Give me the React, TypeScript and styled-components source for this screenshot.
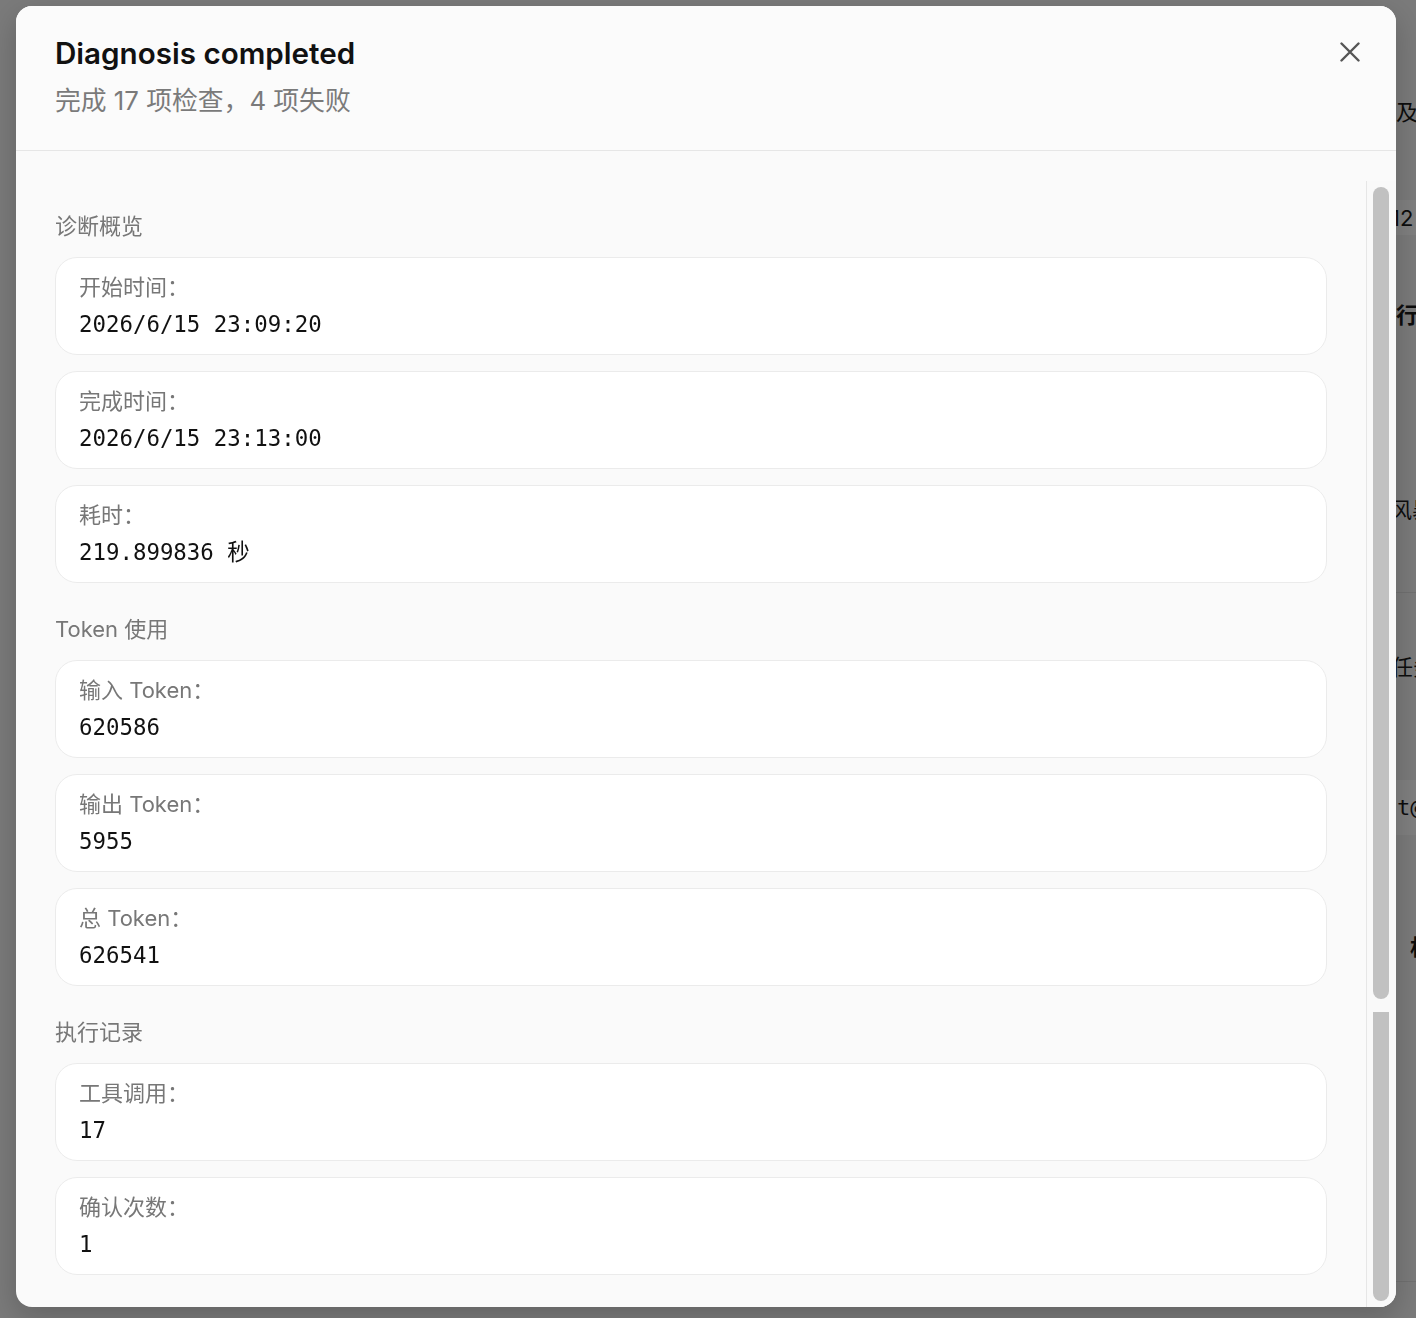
import React from 'react';
import styled, { createGlobalStyle } from 'styled-components';

const GlobalStyle = createGlobalStyle`
  html, body {
    margin: 0;
    padding: 0;
    width: 1416px;
    height: 1318px;
    overflow: hidden;
    font-family: Inter, 'Noto Sans CJK SC', sans-serif;
  }
  * {
    box-sizing: border-box;
  }
`;

// 뒤쪽 페이지 (오버레이 아래)
const BgPage = styled.div`
  width: 1416px;
  height: 1318px;
  background: #f5f5f5;
  display: grid;
  grid-template-columns: 1396px 1fr;
  overflow: hidden;
`;

const BgColumn = styled.div`
  display: flex;
  flex-direction: column;
  min-width: 0;
`;

const BgRow = styled.div<{ $h: number; $band?: boolean; $line?: boolean }>`
  height: ${(p) => p.$h}px;
  flex: none;
  display: flex;
  align-items: center;
  background: ${(p) => (p.$band ? '#ffffff' : 'transparent')};
  border-top: ${(p) => (p.$line ? '1px solid #e0e0e0' : 'none')};
`;

const BgText = styled.span<{ $bold?: boolean; $mono?: boolean; $shift?: number }>`
  white-space: nowrap;
  font-size: 22px;
  color: #1a1a1a;
  font-weight: ${(p) => (p.$bold ? 700 : 400)};
  font-family: ${(p) =>
    p.$mono ? "'DejaVu Sans Mono', monospace" : "Inter, 'Noto Sans CJK SC', sans-serif"};
  margin-left: ${(p) => p.$shift || 0}px;
`;

const Overlay = styled.div`
  position: fixed;
  inset: 0;
  background: rgba(0, 0, 0, 0.5);
  padding: 6px 20px 11px 16px;
  display: flex;
`;

const Modal = styled.div`
  flex: 1;
  display: flex;
  flex-direction: column;
  background: #fafafa;
  border-radius: 16px;
  overflow: hidden;
  box-shadow: 0 10px 30px rgba(0, 0, 0, 0.2);
`;

const Header = styled.div`
  display: flex;
  align-items: flex-start;
  justify-content: space-between;
  padding: 29px 36px 31px 39px;
  border-bottom: 1px solid #e6e6e6;
  background: #fbfbfb;
`;

const Title = styled.h2`
  margin: 0;
  font-family: Inter, 'Noto Sans CJK SC', sans-serif;
  font-size: 29.6px;
  line-height: 36px;
  font-weight: 600;
  color: #111;
`;

const Subtitle = styled.p`
  margin: 12px 0 0;
  font-size: 25.8px;
  line-height: 36px;
  color: #7a7a7a;
`;

const CloseButton = styled.button`
  margin-top: 7px;
  width: 20px;
  height: 20px;
  padding: 0;
  border: none;
  background: none;
  color: #555;
  cursor: pointer;
  display: flex;
`;

const Body = styled.div`
  flex: 1;
  min-height: 0;
  display: flex;
  padding-top: 30px;
`;

const ScrollArea = styled.div`
  flex: 1;
  min-width: 0;
  overflow: hidden;
  padding: 30px 39px 30px 39px;
  display: flex;
  flex-direction: column;
  gap: 31px;
`;

const Section = styled.section`
  display: flex;
  flex-direction: column;
`;

const SectionTitle = styled.div`
  font-size: 22px;
  line-height: 30px;
  color: #777;
  margin-bottom: 16px;
`;

const CardList = styled.div`
  display: flex;
  flex-direction: column;
  gap: 16px;
`;

const Card = styled.div`
  background: #fff;
  border: 1px solid #ebebeb;
  border-radius: 22px;
  padding: 14px 23px;
  height: 98px;
  display: flex;
  flex-direction: column;
  gap: 7px;
`;

const Label = styled.div`
  font-size: 22px;
  line-height: 30px;
  height: 30px;
  color: #777;
`;

const Value = styled.div`
  font-family: 'DejaVu Sans Mono', 'Noto Sans CJK SC', monospace;
  font-size: 22.4px;
  line-height: 30px;
  height: 30px;
  color: #111;
`;

const Track = styled.div`
  width: 30px;
  flex: none;
  border-left: 1px solid #e6e6e6;
  background: #f9f9f9;
  padding: 6px 7px 6px 6px;
  display: flex;
  flex-direction: column;
  gap: 13px;
`;

const Thumb = styled.div<{ $tail?: boolean }>`
  background: #c1c1c1;
  border-radius: ${(p) => (p.$tail ? '0 0 8px 8px' : '8px')};
  height: ${(p) => (p.$tail ? 'auto' : '812px')};
  flex: ${(p) => (p.$tail ? '1' : 'none')};
`;

const sections = [
  {
    title: '诊断概览',
    items: [
      ['开始时间：', '2026/6/15 23:09:20'],
      ['完成时间：', '2026/6/15 23:13:00'],
      ['耗时：', '219.899836 秒'],
    ],
  },
  {
    title: 'Token 使用',
    items: [
      ['输入 Token：', '620586'],
      ['输出 Token：', '5955'],
      ['总 Token：', '626541'],
    ],
  },
  {
    title: '执行记录',
    items: [
      ['工具调用：', '17'],
      ['确认次数：', '1'],
    ],
  },
];

const bgRows: { h: number; text?: string; bold?: boolean; mono?: boolean; band?: boolean; line?: boolean; shift?: number }[] = [
  { h: 80 },
  { h: 60, text: '及时' },
  { h: 60 },
  { h: 35, text: '12', band: true, shift: -5 },
  { h: 63 },
  { h: 30, text: '行为', bold: true },
  { h: 165 },
  { h: 30, text: '风暴', shift: -6 },
  { h: 69 },
  { h: 58, line: true },
  { h: 30, text: '任务', shift: -5 },
  { h: 100 },
  { h: 55, text: 't@mail', mono: true, band: true, shift: 1 },
  { h: 95 },
  { h: 30, text: '相关', bold: true, shift: 14 },
  { h: 321 },
  { h: 40, line: true },
];

const App = () => {
  return (
    <>
      <GlobalStyle />
      <BgPage>
        <div />
        <BgColumn>
          {bgRows.map((r, i) => (
            <BgRow key={i} $h={r.h} $band={r.band} $line={r.line}>
              {r.text && (
                <BgText $bold={r.bold} $mono={r.mono} $shift={r.shift}>
                  {r.text}
                </BgText>
              )}
            </BgRow>
          ))}
        </BgColumn>
      </BgPage>

      <Overlay>
        <Modal>
          <Header>
            <div>
              <Title>Diagnosis completed</Title>
              <Subtitle>完成 17 项检查，4 项失败</Subtitle>
            </div>
            <CloseButton aria-label="关闭">
              <svg width="20" height="20" viewBox="0 0 20 20" fill="none">
                <path d="M1.5 1.5L18.5 18.5M18.5 1.5L1.5 18.5" stroke="currentColor" strokeWidth="2.4" strokeLinecap="round" />
              </svg>
            </CloseButton>
          </Header>

          <Body>
            <ScrollArea>
              {sections.map((s) => (
                <Section key={s.title}>
                  <SectionTitle>{s.title}</SectionTitle>
                  <CardList>
                    {s.items.map(([label, value]) => (
                      <Card key={label}>
                        <Label>{label}</Label>
                        <Value>{value}</Value>
                      </Card>
                    ))}
                  </CardList>
                </Section>
              ))}
            </ScrollArea>
            {/* 스크롤바 */}
            <Track>
              <Thumb />
              <Thumb $tail />
            </Track>
          </Body>
        </Modal>
      </Overlay>
    </>
  );
};

export default App;
